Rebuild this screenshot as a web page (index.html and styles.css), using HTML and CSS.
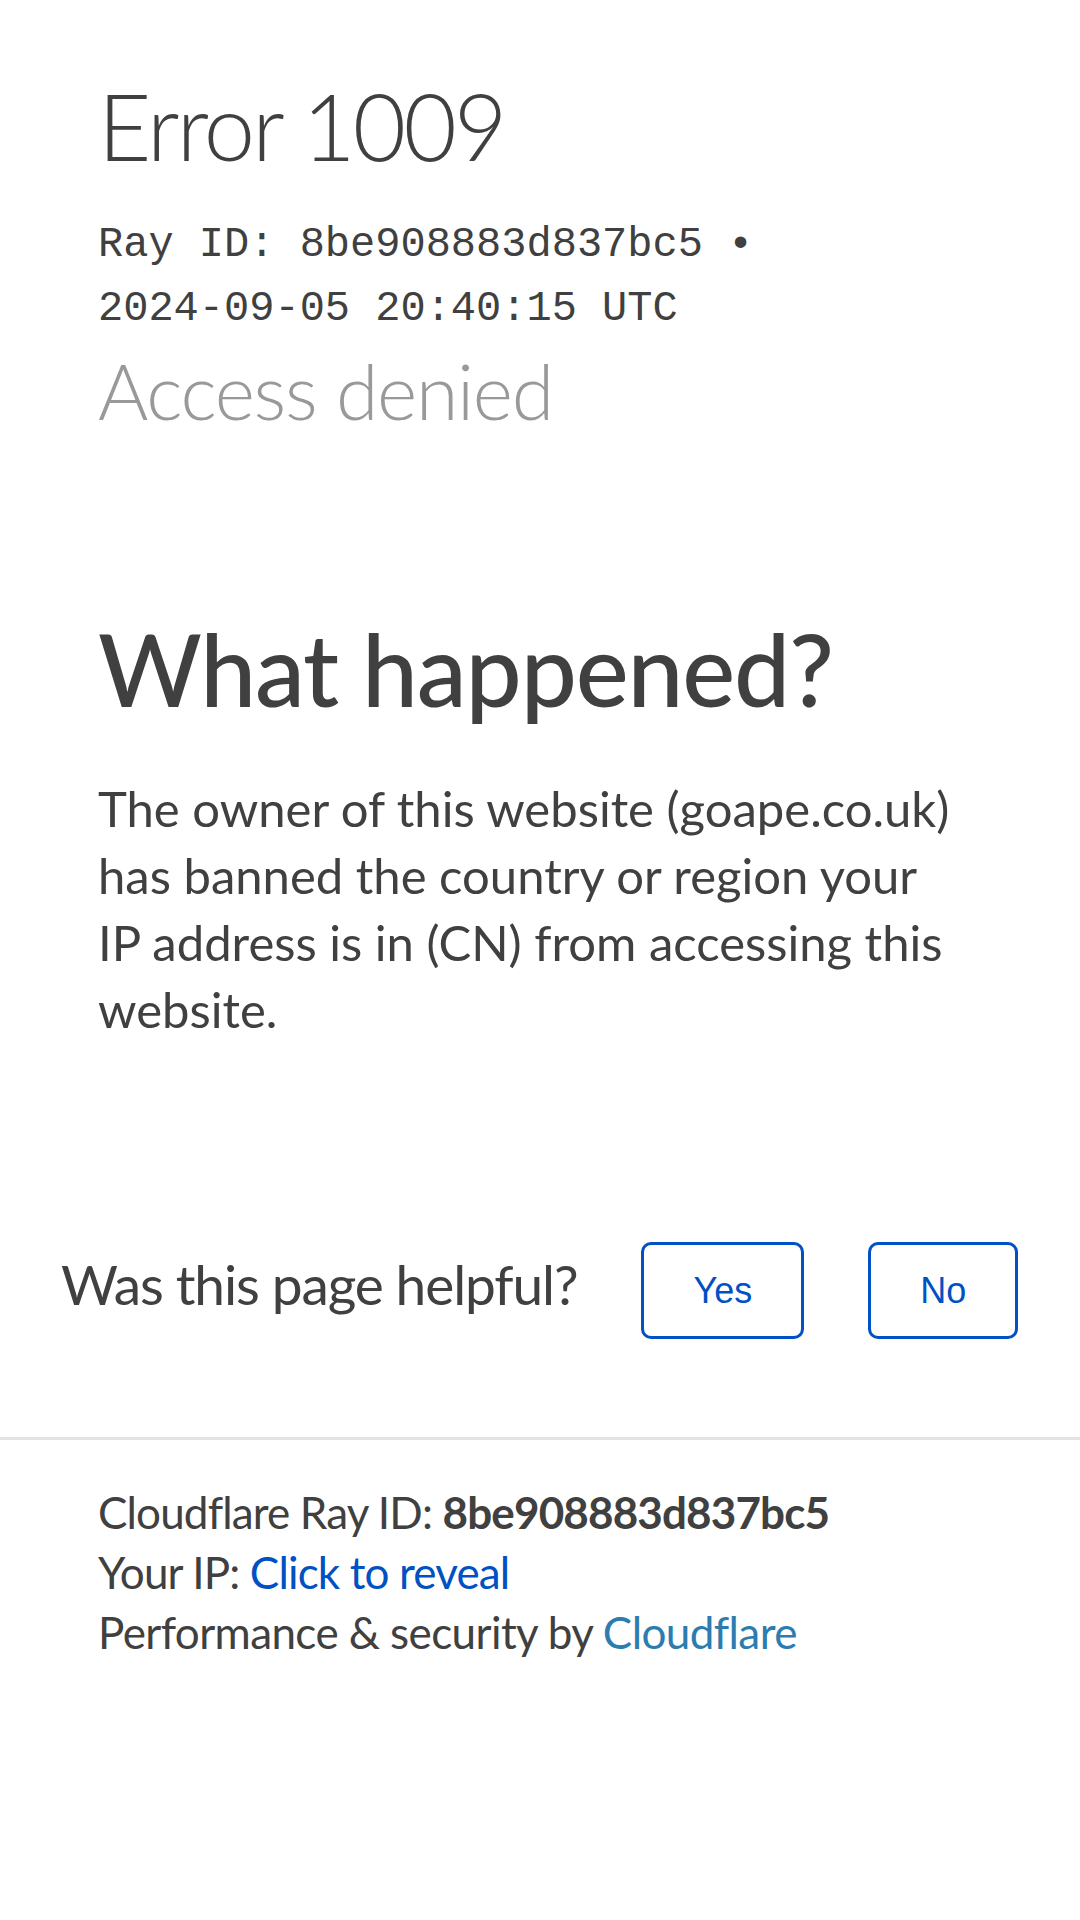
FILE: index.html
```html
<!DOCTYPE html>
<html lang="en">
<head>
<meta charset="utf-8">
<title>Access denied | goape.co.uk used Cloudflare to restrict access</title>
<link rel="stylesheet" href="styles.css">
</head>
<body>
<div class="page">
  <section class="overview">
    <h1 class="error-title"><span class="error-type">Error</span> <span class="error-code">1009</span></h1>
    <p class="ray-heading">Ray ID: 8be908883d837bc5 &bull; <span class="ray-time">2024-09-05 20:40:15 UTC</span></p>
    <h2 class="subheadline">Access denied</h2>
  </section>

  <section class="details">
    <h2 class="details-title">What happened?</h2>
    <p class="details-text">The owner of this website (goape.co.uk) has banned the country or region your IP address is in (CN) from accessing this website.</p>
  </section>

  <section class="feedback">
    <span class="feedback-question">Was this page helpful?</span>
    <button class="feedback-btn" type="button">Yes</button>
    <button class="feedback-btn" type="button">No</button>
  </section>

  <footer class="footer">
    <p class="footer-line">Cloudflare Ray ID: <strong class="ray-id">8be908883d837bc5</strong></p>
    <p class="footer-line">Your IP: <a class="reveal-link" href="#">Click to reveal</a></p>
    <p class="footer-line footer-perf">Performance &amp; security by <a class="cf-link" href="#">Cloudflare</a></p>
  </footer>
</div>
</body>
</html>
```
FILE: styles.css
```css
html, body {
  margin: 0;
  padding: 0;
  background: #ffffff;
}

body {
  font-family: "Lato", "Noto Sans", sans-serif;
  color: #404040;
}

.page {
  display: flex;
  flex-direction: column;
}

.overview {
  padding: 76px 116px 0 98px;
}

.error-title {
  margin: 0;
  font-size: 92px;
  line-height: 100px;
  font-weight: 300;
  letter-spacing: -2.8px;
  color: #404040;
  white-space: nowrap;
}

.ray-heading {
  margin: 37px 0 0 0;
  font-family: "Liberation Mono", "Courier New", monospace;
  font-size: 42px;
  line-height: 64px;
  color: #404040;
}

.ray-time {
  white-space: nowrap;
}

.subheadline {
  margin: 4px 0 0 0;
  font-size: 77px;
  line-height: 90px;
  font-weight: 300;
  letter-spacing: -1.3px;
  color: #999999;
}

.details {
  padding: 173px 116px 0 98px;
}

.details-title {
  margin: 0;
  font-size: 100px;
  line-height: 120px;
  font-weight: 500;
  letter-spacing: -1.2px;
  color: #404040;
}

.details-text {
  margin: 47px 0 0 0;
  font-size: 49px;
  line-height: 67px;
  font-weight: 400;
  color: #404040;
}

.feedback {
  display: flex;
  align-items: center;
  gap: 64px;
  margin-top: 199px;
  padding: 0 61px;
}

.feedback-question {
  font-size: 55px;
  line-height: 83px;
  letter-spacing: -1.1px;
  padding-bottom: 12px;
  color: #404040;
}

.feedback-btn {
  box-sizing: border-box;
  height: 97px;
  padding: 0 49px;
  border: 3px solid #0051c3;
  border-radius: 10px;
  background: #ffffff;
  color: #0051c3;
  font-family: "Liberation Sans", Arial, sans-serif;
  font-size: 36px;
  line-height: 1;
}

.footer {
  margin-top: 98px;
  border-top: 3px solid #e3e3e3;
  padding: 42px 116px 0 98px;
}

.footer-line {
  margin: 0;
  font-size: 44px;
  line-height: 60px;
  letter-spacing: -0.85px;
  color: #404040;
}

.footer-perf {
  letter-spacing: -0.6px;
}

.ray-id {
  font-weight: 700;
}

.reveal-link {
  color: #0051c3;
  text-decoration: none;
}

.cf-link {
  color: #2c7cb0;
  text-decoration: none;
}
```
